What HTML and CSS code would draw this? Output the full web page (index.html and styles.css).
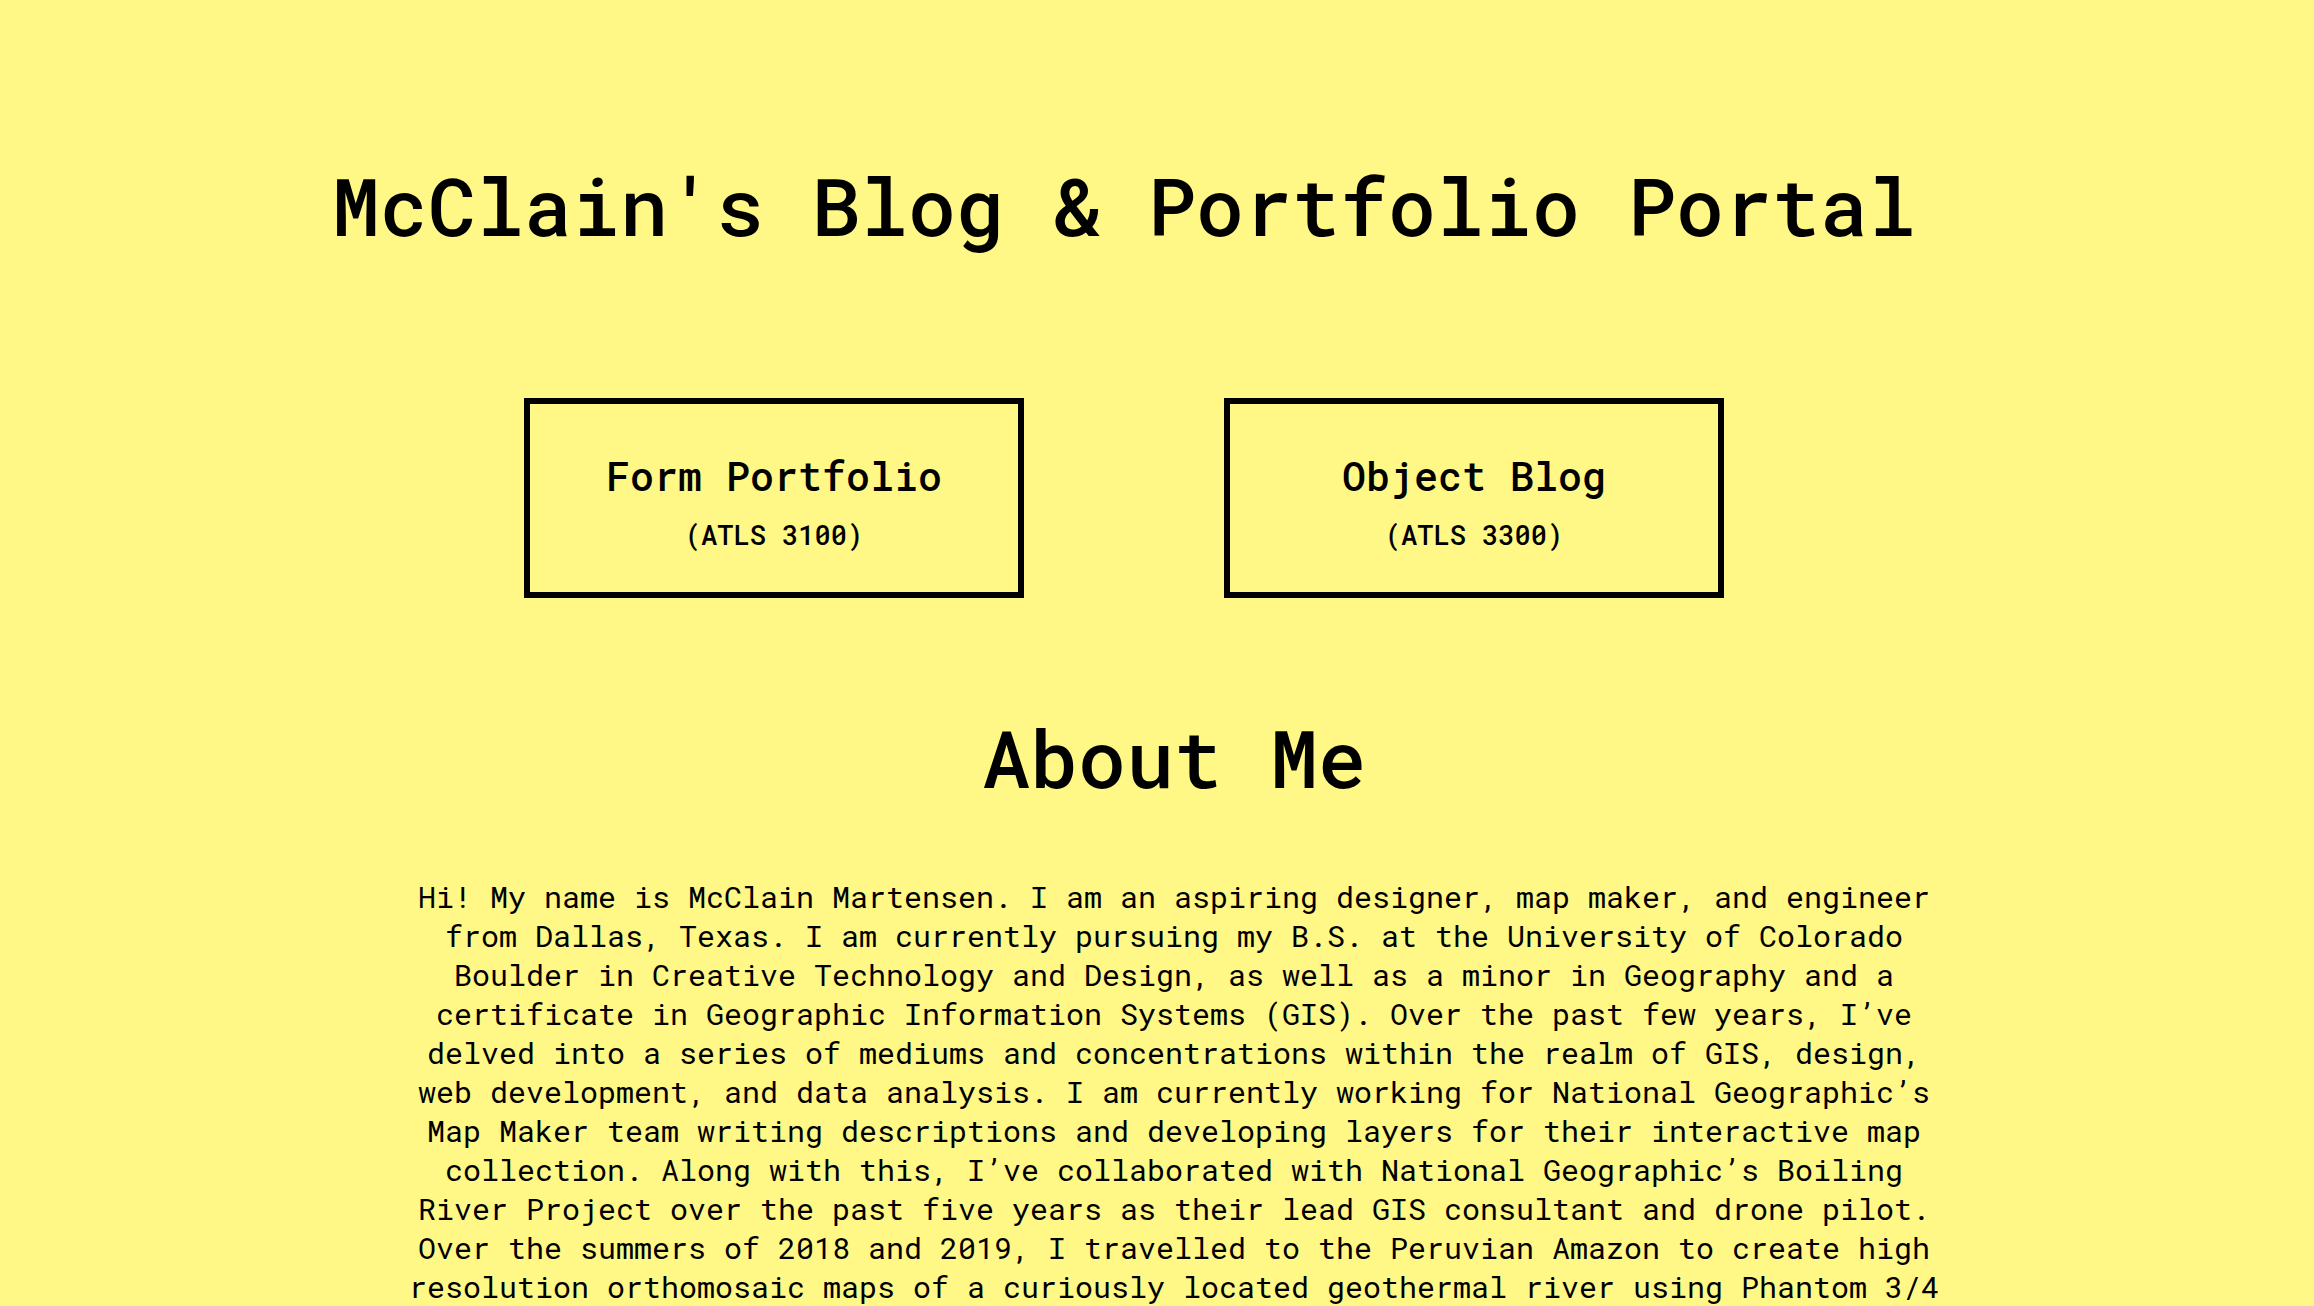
FILE: index.html
```html
<!DOCTYPE html>
<html lang="en">
<head>
  <meta charset="utf-8">
  <meta name="viewport" content="width=device-width, initial-scale=1">
  <title>McClain's Blog &amp; Portfolio Portal</title>
  <link rel="stylesheet" href="styles.css">
</head>
<body>
  <header class="portal">
    <h1 class="heading">McClain's Blog &amp; Portfolio Portal</h1>
    <nav class="cards">
      <a class="card" href="#form-portfolio">
        <span class="card-title">Form Portfolio</span>
        <span class="card-course">(ATLS 3100)</span>
      </a>
      <a class="card" href="#object-blog">
        <span class="card-title">Object Blog</span>
        <span class="card-course">(ATLS 3300)</span>
      </a>
    </nav>
  </header>
  <main class="about">
    <h2 class="heading">About Me</h2>
    <p class="bio">Hi! My name is McClain Martensen. I am an aspiring designer, map maker, and engineer from Dallas, Texas. I am currently pursuing my B.S. at the University of Colorado Boulder in Creative Technology and Design, as well as a minor in Geography and a certificate in Geographic Information Systems (GIS). Over the past few years, I’ve delved into a series of mediums and concentrations within the realm of GIS, design, web development, and data analysis. I am currently working for National Geographic’s Map Maker team writing descriptions and developing layers for their interactive map collection. Along with this, I’ve collaborated with National Geographic’s Boiling River Project over the past five years as their lead GIS consultant and drone pilot. Over the summers of 2018 and 2019, I travelled to the Peruvian Amazon to create high resolution orthomosaic maps of a curiously located geothermal river using Phantom 3/4</p>
  </main>
</body>
</html>
```

FILE: styles.css
```css
* {
  box-sizing: border-box;
}

body {
  margin: 0;
  padding: 152px 0 0 34px;
  background: #fff886;
  color: #000;
  font-family: "Roboto Mono", "DejaVu Sans Mono", monospace;
  text-align: center;
}

.heading {
  margin: 0;
  font-size: 80px;
  font-weight: 500;
  line-height: 106px;
}

.portal {
  padding-right: 100px;
}

.cards {
  display: flex;
  flex-wrap: wrap;
  justify-content: center;
  gap: 40px 200px;
  margin-top: 140px;
}

.card {
  display: flex;
  flex-direction: column;
  align-items: center;
  gap: 16px;
  width: 500px;
  min-height: 200px;
  padding: 45px 16px 32px;
  border: 6px solid #000;
  color: inherit;
  font-weight: 500;
  text-decoration: none;
}

.card-title {
  font-size: 40px;
  line-height: 53px;
}

.card-course {
  font-size: 27px;
  line-height: 34px;
}

.about {
  margin-top: 106px;
}

.bio {
  max-width: 1552px;
  margin: 67px auto 0;
  font-size: 30px;
  line-height: 39px;
}
```
